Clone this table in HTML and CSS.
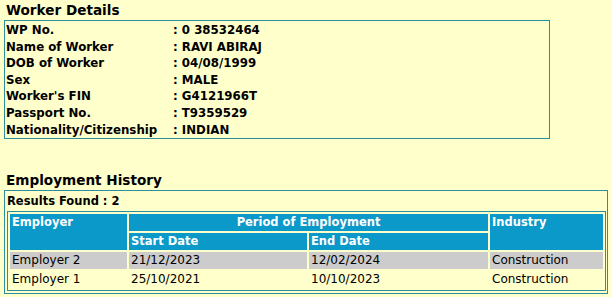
FILE: index.html
```html
<!DOCTYPE html>
<html>
<head>
<meta charset="utf-8">
<link rel="stylesheet" href="styles.css">
</head>
<body>
<div class="page">
  <h2 class="title">Worker Details</h2>
  <div class="box details">
    <div class="row"><span class="lbl">WP No.</span><span class="val">: 0 38532464</span></div>
    <div class="row"><span class="lbl">Name of Worker</span><span class="val">: RAVI ABIRAJ</span></div>
    <div class="row"><span class="lbl">DOB of Worker</span><span class="val">: 04/08/1999</span></div>
    <div class="row"><span class="lbl">Sex</span><span class="val">: MALE</span></div>
    <div class="row"><span class="lbl">Worker's FIN</span><span class="val">: G4121966T</span></div>
    <div class="row"><span class="lbl">Passport No.</span><span class="val">: T9359529</span></div>
    <div class="row"><span class="lbl">Nationality/Citizenship</span><span class="val">: INDIAN</span></div>
  </div>
  <h2 class="title">Employment History</h2>
  <div class="box history">
    <div class="results">Results Found : 2</div>
    <table class="emp">
      <colgroup>
        <col class="c1"><col class="c2"><col class="c3"><col class="c4">
      </colgroup>
      <tr>
        <th rowspan="2" class="top">Employer</th>
        <th colspan="2" class="center">Period of Employment</th>
        <th rowspan="2" class="top">Industry</th>
      </tr>
      <tr>
        <th>Start Date</th>
        <th>End Date</th>
      </tr>
      <tr class="alt">
        <td>Employer 2</td><td>21/12/2023</td><td>12/02/2024</td><td>Construction</td>
      </tr>
      <tr>
        <td>Employer 1</td><td>25/10/2021</td><td>10/10/2023</td><td>Construction</td>
      </tr>
    </table>
  </div>
</div>
</body>
</html>
```

FILE: styles.css
```css
html, body {
  margin: 0;
  padding: 0;
  background: #ffffcc;
}
body {
  padding: 0 4px;
  font-family: "DejaVu Sans", Verdana, sans-serif;
  color: #000;
}
.title {
  margin: 0;
  padding-left: 2px;
  height: 20px;
  line-height: 20px;
  font-size: 13.6px;
  font-weight: bold;
}
.box {
  border: 1px solid #2b8f9e;
  box-sizing: border-box;
}
.details {
  width: 546px;
  height: 119px;
  padding: 1px 0 0 1px;
  margin-bottom: 31px;
  font-size: 11.8px;
  font-weight: bold;
}
.row {
  display: flex;
  height: 16.6px;
  line-height: 16.6px;
}
.lbl {
  width: 167px;
}
.history {
  width: 604px;
  padding: 0 2px 2px 2px;
}
.results {
  height: 20px;
  line-height: 20px;
  margin-left: -1px;
  padding-left: 1px;
  font-size: 11.5px;
  font-weight: bold;
}
.emp {
  width: 100%;
  border: 1px solid #2b8f9e;
  border-spacing: 2px;
  font-size: 12px;
  table-layout: fixed;
}
.c1 { width: 117px; }
.c2 { width: 178px; }
.c3 { width: 179px; }
.c4 { width: 113px; }
.emp th, .emp td {
  padding: 0 2px;
  height: 17px;
  line-height: 17px;
  text-align: left;
  white-space: nowrap;
}
.emp th {
  background: #0a99c9;
  color: #fff;
  font-weight: bold;
  font-size: 11.5px;
}
.emp th.top {
  vertical-align: top;
}
.emp th.center {
  text-align: center;
}
.emp tr.alt td {
  background: #cccccc;
}
```
